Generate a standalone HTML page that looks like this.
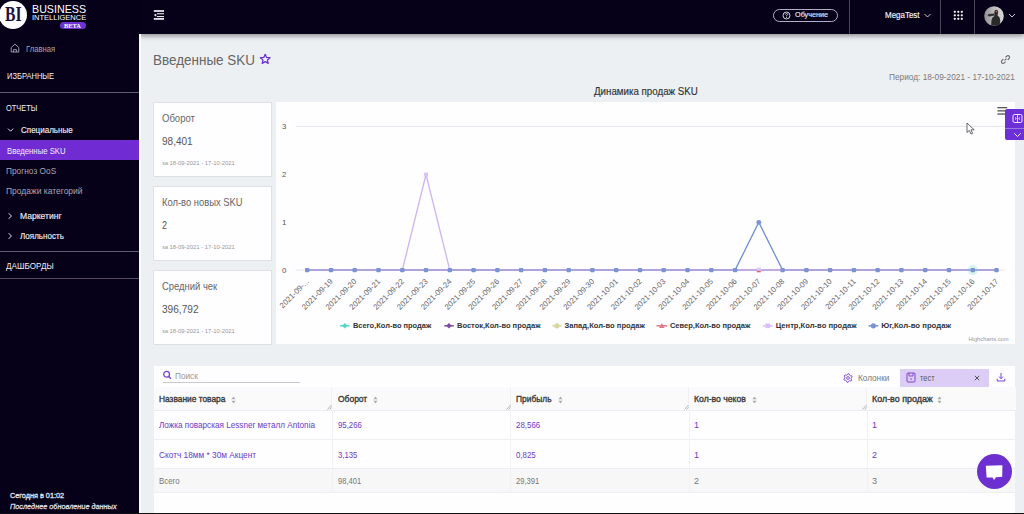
<!DOCTYPE html>
<html><head><meta charset="utf-8">
<style>
*{box-sizing:border-box;margin:0;padding:0}
html,body{width:1024px;height:514px;overflow:hidden;font-family:"Liberation Sans",sans-serif;background:#edf0f3;position:relative}
.abs{position:absolute}
.nw{white-space:nowrap}
#side{position:absolute;left:0;top:0;width:139px;height:514px;background:#060019}
#hdr{position:absolute;left:139px;top:0;width:885px;height:34px;background:#060019;box-shadow:0 2px 5px rgba(0,0,0,.42)}
.sb{position:absolute;white-space:nowrap;line-height:1}
.sm{-webkit-text-stroke:0.15px currentColor}
.sm2{-webkit-text-stroke:0.3px currentColor}
.card{position:absolute;left:153px;width:119.3px;height:75px;background:#fefdff;border:1px solid #dfe0e2}
.card .t{position:absolute;left:8px;top:10px;font-size:10.5px;color:#666;white-space:nowrap;line-height:1}
.card .v{position:absolute;left:8px;top:33px;font-size:11px;color:#555;white-space:nowrap;line-height:1}
.card .d{position:absolute;left:8px;top:56.5px;font-size:6px;color:#999;white-space:nowrap;line-height:1}
.th{position:absolute;top:387px;height:23.5px;background:#fafafb;border-right:1px solid #f0f0f2;border-bottom:1px solid #ededef;font-size:8.3px;font-weight:bold;color:#444;line-height:23px;padding-left:6px;white-space:nowrap}
.td{position:absolute;font-size:9px;white-space:nowrap;line-height:1}
.vl{position:absolute;width:1px;background:#f2f2f4}
.hl{position:absolute;height:1px;background:#efeff1}
.hd{position:absolute;top:394.5px;font-size:8.8px;color:#3a3a3a;-webkit-text-stroke:0.35px #3a3a3a;line-height:1;white-space:nowrap}
.sort{display:inline-block;vertical-align:middle;margin-left:6px;width:4px;height:9px;position:relative;top:-1px}
</style></head><body>
<!-- sidebar -->
<div id="side"></div>
<div id="hdr"></div>
<div class="abs" style="left:139px;top:34px;width:2px;height:480px;background:#f9fafb"></div>

<!-- logo -->
<div class="abs" style="left:-0.6px;top:1.3px;width:28px;height:28px;border-radius:50%;background:#fff"></div>
<div class="abs nw" style="left: 5.3px; top: 4.4px; font-family: &quot;Liberation Serif&quot;, serif; font-weight: bold; font-size: 20px; line-height: 1; color: rgb(27, 18, 64); transform: scaleX(0.7826); transform-origin: 0px 50%;">BI</div>
<div class="abs nw" style="left: 32.1px; top: 4.1px; font-size: 10.6px; line-height: 1; color: rgb(255, 255, 255); transform: scaleX(1.0092); transform-origin: 0px 50%;">BUSINESS</div>
<div class="abs nw" style="left: 32.1px; top: 13.8px; font-size: 7.8px; line-height: 1; color: rgb(255, 255, 255); transform: scaleX(0.9621); transform-origin: 0px 50%;">INTELLIGENCE</div>
<div class="abs" style="left:59.8px;top:22.4px;width:25.9px;height:7px;border-radius:3.5px;background:#6d34d3"></div>
<div class="abs nw" style="left: 64.1px; top: 22.6px; font-family: &quot;Liberation Serif&quot;, serif; font-weight: bold; font-size: 6.3px; line-height: 1; color: rgb(255, 255, 255); transform: scaleX(1.004); transform-origin: 0px 50%;">BETA</div>
<!-- sidebar menu -->
<svg class="abs" style="left:10.2px;top:43.3px" width="10" height="10" viewBox="0 0 10 10"><path d="M1.2 4.6 L5 1.1 L8.8 4.6 V9 H1.2Z M3.6 9 V6.6 H6.4 V9" fill="none" stroke="#aaa6ba" stroke-width="0.9" stroke-linejoin="round"></path></svg>
<div class="sb" style="left: 25.5px; top: 44.5px; font-size: 8.5px; color: rgb(169, 167, 179); transform: scaleX(0.9008); transform-origin: 0px 50%;">Главная</div>
<div class="sb" style="left: 6.6px; top: 72.3px; font-size: 8.4px; color: rgb(240, 240, 244); transform: scaleX(0.8995); transform-origin: 0px 50%;">ИЗБРАННЫЕ</div>
<div class="abs" style="left:0;top:92px;width:139px;height:1px;background:#5d5b6b"></div>
<div class="sb" style="left: 6px; top: 103.6px; font-size: 8.4px; color: rgb(240, 240, 244); transform: scaleX(0.8879); transform-origin: 0px 50%;">ОТЧЕТЫ</div>
<svg class="abs" style="left:7px;top:127px" width="7" height="6" viewBox="0 0 7 6"><path d="M1 1.6 L3.6 4.2 L6.2 1.6" fill="none" stroke="#e2e2ea" stroke-width="1"></path></svg>
<div class="sb sm" style="left: 20.5px; top: 126px; font-size: 8.5px; color: rgb(236, 236, 242); transform: scaleX(0.9454); transform-origin: 0px 50%;">Специальные</div>
<div class="abs" style="left:0;top:140px;width:139px;height:20px;background:#702bd3"></div>
<div class="sb" style="left: 6.6px; top: 147px; font-size: 8.5px; color: rgb(242, 238, 252); transform: scaleX(0.9091); transform-origin: 0px 50%;">Введенные SKU</div>
<div class="sb" style="left: 5.8px; top: 166.5px; font-size: 8.5px; color: rgb(169, 167, 179); transform: scaleX(0.9789); transform-origin: 0px 50%;">Прогноз OoS</div>
<div class="sb" style="left: 5.8px; top: 186.5px; font-size: 8.5px; color: rgb(169, 167, 179); transform: scaleX(0.9981); transform-origin: 0px 50%;">Продажи категорий</div>
<svg class="abs" style="left:7px;top:212px" width="6" height="8" viewBox="0 0 6 8"><path d="M1.7 1.2 L4.4 4 L1.7 6.8" fill="none" stroke="#e2e2ea" stroke-width="1"></path></svg>
<div class="sb sm" style="left: 20.4px; top: 212px; font-size: 8.5px; color: rgb(236, 236, 242); transform: scaleX(1.0067); transform-origin: 0px 50%;">Маркетинг</div>
<svg class="abs" style="left:7px;top:232px" width="6" height="8" viewBox="0 0 6 8"><path d="M1.7 1.2 L4.4 4 L1.7 6.8" fill="none" stroke="#e2e2ea" stroke-width="1"></path></svg>
<div class="sb sm" style="left: 20.4px; top: 232px; font-size: 8.5px; color: rgb(236, 236, 242); transform: scaleX(0.9475); transform-origin: 0px 50%;">Лояльность</div>
<div class="abs" style="left:0;top:251px;width:139px;height:1px;background:#5d5b6b"></div>
<div class="sb" style="left: 5.8px; top: 262.4px; font-size: 8.4px; color: rgb(240, 240, 244); transform: scaleX(0.9743); transform-origin: 0px 50%;">ДАШБОРДЫ</div>
<div class="abs" style="left:0;top:278.3px;width:139px;height:1px;background:#4f4d5e"></div>
<div class="sb sm2" style="left: 10.2px; top: 492.1px; font-size: 7.6px; color: rgb(230, 230, 236); transform: scaleX(0.9602); transform-origin: 0px 50%;">Сегодня в 01:02</div>
<div class="sb sm2" style="left: 10.2px; top: 503px; font-size: 7.6px; font-style: italic; color: rgb(220, 220, 228); transform: scaleX(0.9617); transform-origin: 0px 50%;">Последнее обновление данных</div>

<!-- header -->
<svg class="abs" style="left:153px;top:9px" width="12" height="12" viewBox="0 0 12 12"><g fill="#e4e4ec"><rect x="0.8" y="1.1" width="10.2" height="1.8"></rect><rect x="4" y="4.2" width="7" height="1.1"></rect><rect x="4" y="7" width="7" height="1.1"></rect><rect x="0.8" y="9" width="10.2" height="1.8"></rect><path d="M0.7 6.1 L3.3 4.4 V7.8Z"></path></g></svg>
<div class="abs" style="left:773px;top:9px;width:64.5px;height:12.5px;border:1px solid #b4abc6;border-radius:7px"></div>
<svg class="abs" style="left:782px;top:11px" width="9" height="9" viewBox="0 0 9 9"><circle cx="4.5" cy="4.5" r="3.5" fill="none" stroke="#e8e8ee" stroke-width="0.9"></circle><path d="M3.3 3.6 Q3.4 2.5 4.5 2.5 Q5.7 2.5 5.7 3.5 Q5.7 4.2 4.5 4.7 V5.3" fill="none" stroke="#e8e8ee" stroke-width="0.8"></path><circle cx="4.5" cy="6.5" r="0.5" fill="#e8e8ee"></circle></svg>
<div class="sb sm" style="left: 794.8px; top: 11.3px; font-size: 7.8px; color: rgb(236, 230, 246); transform: scaleX(0.9287); transform-origin: 0px 50%;">Обучение</div>
<div class="abs" style="left:849px;top:0;width:1px;height:34px;background:#4a4858"></div>
<div class="abs" style="left:940px;top:0;width:1px;height:34px;background:#4a4858"></div>
<div class="abs" style="left:974px;top:0;width:1px;height:34px;background:#4a4858"></div>
<div class="sb sm" style="left: 884.5px; top: 10.5px; font-size: 9.2px; color: rgb(244, 244, 248); transform: scaleX(0.8665); transform-origin: 0px 50%;">MegaTest</div>
<svg class="abs" style="left:923px;top:12px" width="9" height="7" viewBox="0 0 9 7"><path d="M1.5 2 L4.5 5 L7.5 2" fill="none" stroke="#e0e0e8" stroke-width="0.9"></path></svg>
<svg class="abs" style="left:952.5px;top:10.2px" width="11" height="11" viewBox="0 0 11 11"><g fill="#f4f4f8"><circle cx="1.8" cy="1.8" r="1.15"></circle><circle cx="5.3" cy="1.8" r="1.15"></circle><circle cx="8.8" cy="1.8" r="1.15"></circle><circle cx="1.8" cy="5.3" r="1.15"></circle><circle cx="5.3" cy="5.3" r="1.15"></circle><circle cx="8.8" cy="5.3" r="1.15"></circle><circle cx="1.8" cy="8.8" r="1.15"></circle><circle cx="5.3" cy="8.8" r="1.15"></circle><circle cx="8.8" cy="8.8" r="1.15"></circle></g></svg>
<svg class="abs" style="left:983.5px;top:5.5px" width="20" height="20" viewBox="0 0 20 20"><defs><clipPath id="av"><circle cx="10" cy="10" r="9.8"></circle></clipPath><linearGradient id="avg" x1="0" y1="0" x2="1" y2="0"><stop offset="0" stop-color="#8e8e8e"></stop><stop offset=".5" stop-color="#bdbdbd"></stop><stop offset="1" stop-color="#d8d8d8"></stop></linearGradient></defs><g clip-path="url(#av)"><rect width="20" height="20" fill="url(#avg)"></rect><path d="M7 21 L7.5 14 Q8 11 10.5 10 L10.8 8.5 Q10 7 10.6 5 Q11.8 3 13.5 4.2 Q14.5 5.5 13.8 8 L13.5 9.6 Q16 11 16.2 14 L16 21Z" fill="#2a2a2a"></path><path d="M11 9.5 L5 10.5 L3.5 9.2 L4.5 8 L10.6 7.5Z" fill="#333"></path><circle cx="12.4" cy="5.6" r="0.8" fill="#c86a50"></circle></g></svg>
<svg class="abs" style="left:1007.5px;top:12px" width="8" height="7" viewBox="0 0 8 7"><path d="M1 2 L4 5 L7 2" fill="none" stroke="#e0e0e8" stroke-width="0.9"></path></svg>

<!-- title -->
<div class="abs nw" style="left: 153.04px; top: 52.5px; font-size: 14px; line-height: 1; color: rgb(102, 102, 102); transform: scaleX(0.9626); transform-origin: 0px 50%;">Введенные SKU</div>
<svg class="abs" style="left:259px;top:52.6px" width="12" height="12" viewBox="0 0 12 12"><path d="M6.2 1.3 L7.6 4.4 L11 4.7 L8.4 6.9 L9.2 10.4 L6.2 8.6 L3.2 10.4 L4 6.9 L1.4 4.7 L4.8 4.4Z" fill="none" stroke="#6b30d4" stroke-width="1.25" stroke-linejoin="round"></path></svg>
<svg class="abs" style="left:1000px;top:54px" width="11" height="11" viewBox="0 0 11 11"><g fill="none" stroke="#666" stroke-width="1.1"><path d="M4.6 6.4 L6.4 4.6"></path><path d="M5.5 3.4 L6.8 2.1 Q8 1 9.2 2.1 Q10.2 3.3 9.1 4.5 L7.7 5.9"></path><path d="M5.5 7.6 L4.2 8.9 Q3 10 1.8 8.9 Q0.8 7.7 1.9 6.5 L3.3 5.1"></path></g></svg>
<div class="abs nw" style="left: 888.7px; top: 72.5px; font-size: 9.3px; line-height: 1; color: rgb(122, 122, 122); transform: scaleX(0.8909); transform-origin: 0px 50%;">Период: 18-09-2021 - 17-10-2021</div>
<div class="abs nw sm" style="left: 593.7px; top: 86.7px; font-size: 10px; line-height: 1; color: rgb(51, 51, 51); transform: scaleX(0.974); transform-origin: 0px 50%;">Динамика продаж SKU</div>

<!-- kpi cards -->
<div class="card" style="top:102px"><div class="t" style="left: 7.5px; transform: scaleX(0.9076); transform-origin: 0px 50%;">Оборот</div><div class="v" style="left: 7.5px; transform: scaleX(0.9097); transform-origin: 0px 50%;">98,401</div><div class="d" style="left: 7.5px; transform: scaleX(0.9783); transform-origin: 0px 50%;">за 18-09-2021 - 17-10-2021</div></div>
<div class="card" style="top:186px"><div class="t" style="left: 7.6px; transform: scaleX(0.8938); transform-origin: 0px 50%;">Кол-во новых SKU</div><div class="v" style="left: 7.6px; transform: scaleX(0.8167); transform-origin: 0px 50%;">2</div><div class="d" style="left: 7.5px; transform: scaleX(0.9783); transform-origin: 0px 50%;">за 18-09-2021 - 17-10-2021</div></div>
<div class="card" style="top:270px"><div class="t" style="left: 7.6px; transform: scaleX(0.898); transform-origin: 0px 50%;">Средний чек</div><div class="v" style="left: 7.6px; transform: scaleX(0.9182); transform-origin: 0px 50%;">396,792</div><div class="d" style="left: 7.5px; transform: scaleX(0.9783); transform-origin: 0px 50%;">за 18-09-2021 - 17-10-2021</div></div>

<!-- chart panel -->
<div class="abs" style="left:275.6px;top:102.2px;width:739.7px;height:242px;background:#fefdff"></div>
<svg class="abs" style="left:0;top:0" width="1024" height="514" viewBox="0 0 1024 514">
<g font-family="Liberation Sans" font-size="7.8" fill="#555">
<text x="286.3" y="129.3" text-anchor="end">3</text>
<text x="286.3" y="177.1" text-anchor="end">2</text>
<text x="286.3" y="224.9" text-anchor="end">1</text>
<text x="286.3" y="272.7" text-anchor="end">0</text>
</g>
<line x1="295.5" y1="126.4" x2="1005" y2="126.4" stroke="#e3e6ea" stroke-width="1"></line>
<line x1="295.5" y1="270.1" x2="1005" y2="270.1" stroke="#e3e6ea" stroke-width="1"></line>
<polyline points="307.2,270.1 331.0,270.1 354.7,270.1 378.5,270.1 402.3,270.1 426.0,270.1 449.8,270.1 473.6,270.1 497.4,270.1 521.1,270.1 544.9,270.1 568.7,270.1 592.4,270.1 616.2,270.1 640.0,270.1 663.8,270.1 687.5,270.1 711.3,270.1 735.1,270.1 758.8,270.1 782.6,270.1 806.4,270.1 830.1,270.1 853.9,270.1 877.7,270.1 901.5,270.1 925.2,270.1 949.0,270.1 972.8,270.1 996.5,270.1" fill="none" stroke="#e07a8a" stroke-width="1.2"></polyline>
<polyline points="307.2,270.1 331.0,270.1 354.7,270.1 378.5,270.1 402.3,270.1 426.0,174.5 449.8,270.1 473.6,270.1 497.4,270.1 521.1,270.1 544.9,270.1 568.7,270.1 592.4,270.1 616.2,270.1 640.0,270.1 663.8,270.1 687.5,270.1 711.3,270.1 735.1,270.1 758.8,270.1 782.6,270.1 806.4,270.1 830.1,270.1 853.9,270.1 877.7,270.1 901.5,270.1 925.2,270.1 949.0,270.1 972.8,270.1 996.5,270.1" fill="none" stroke="#cdb4f2" stroke-width="1.3"></polyline>
<polyline points="307.2,270.1 331.0,270.1 354.7,270.1 378.5,270.1 402.3,270.1 426.0,270.1 449.8,270.1 473.6,270.1 497.4,270.1 521.1,270.1 544.9,270.1 568.7,270.1 592.4,270.1 616.2,270.1 640.0,270.1 663.8,270.1 687.5,270.1 711.3,270.1 735.1,270.1 758.8,222.3 782.6,270.1 806.4,270.1 830.1,270.1 853.9,270.1 877.7,270.1 901.5,270.1 925.2,270.1 949.0,270.1 972.8,270.1 996.5,270.1" fill="none" stroke="#6f8fd4" stroke-width="1.3"></polyline>
<polyline points="307.2,270.1 996.5,270.1" fill="none" stroke="#b9a6e6" stroke-width="1.2"></polyline>
<circle cx="972.8" cy="270.1" r="5" fill="#5fd3c8" opacity=".25"></circle>
<g fill="#d7c2f6"><rect x="424.1" y="172.6" width="3.8" height="3.8"></rect></g>
<g fill="#7b93d3"><rect x="305.0" y="267.9" width="4.4" height="4.4" rx="1"></rect><rect x="328.8" y="267.9" width="4.4" height="4.4" rx="1"></rect><rect x="352.5" y="267.9" width="4.4" height="4.4" rx="1"></rect><rect x="376.3" y="267.9" width="4.4" height="4.4" rx="1"></rect><rect x="400.1" y="267.9" width="4.4" height="4.4" rx="1"></rect><rect x="423.8" y="267.9" width="4.4" height="4.4" rx="1"></rect><rect x="447.6" y="267.9" width="4.4" height="4.4" rx="1"></rect><rect x="471.4" y="267.9" width="4.4" height="4.4" rx="1"></rect><rect x="495.2" y="267.9" width="4.4" height="4.4" rx="1"></rect><rect x="518.9" y="267.9" width="4.4" height="4.4" rx="1"></rect><rect x="542.7" y="267.9" width="4.4" height="4.4" rx="1"></rect><rect x="566.5" y="267.9" width="4.4" height="4.4" rx="1"></rect><rect x="590.2" y="267.9" width="4.4" height="4.4" rx="1"></rect><rect x="614.0" y="267.9" width="4.4" height="4.4" rx="1"></rect><rect x="637.8" y="267.9" width="4.4" height="4.4" rx="1"></rect><rect x="661.5" y="267.9" width="4.4" height="4.4" rx="1"></rect><rect x="685.3" y="267.9" width="4.4" height="4.4" rx="1"></rect><rect x="709.1" y="267.9" width="4.4" height="4.4" rx="1"></rect><rect x="732.9" y="267.9" width="4.4" height="4.4" rx="1"></rect><rect x="780.4" y="267.9" width="4.4" height="4.4" rx="1"></rect><rect x="804.2" y="267.9" width="4.4" height="4.4" rx="1"></rect><rect x="827.9" y="267.9" width="4.4" height="4.4" rx="1"></rect><rect x="851.7" y="267.9" width="4.4" height="4.4" rx="1"></rect><rect x="875.5" y="267.9" width="4.4" height="4.4" rx="1"></rect><rect x="899.2" y="267.9" width="4.4" height="4.4" rx="1"></rect><rect x="923.0" y="267.9" width="4.4" height="4.4" rx="1"></rect><rect x="946.8" y="267.9" width="4.4" height="4.4" rx="1"></rect><rect x="970.6" y="267.9" width="4.4" height="4.4" rx="1"></rect><rect x="994.3" y="267.9" width="4.4" height="4.4" rx="1"></rect></g><circle cx="758.8" cy="222.3" r="2.4" fill="#7b93d3"></circle>
<rect x="756.8" y="268.8" width="4" height="3.5" fill="#e0607a"></rect>
<rect x="756.6" y="267.7" width="4.4" height="3" fill="#dccaf6"></rect>
<g font-family="Liberation Sans" font-size="7.8" fill="#666">
<text transform="translate(309.5,282) rotate(-45)" text-anchor="end">2021-09-...</text>
<text transform="translate(333.3,282) rotate(-45)" text-anchor="end">2021-09-19</text>
<text transform="translate(357.0,282) rotate(-45)" text-anchor="end">2021-09-20</text>
<text transform="translate(380.8,282) rotate(-45)" text-anchor="end">2021-09-21</text>
<text transform="translate(404.6,282) rotate(-45)" text-anchor="end">2021-09-22</text>
<text transform="translate(428.3,282) rotate(-45)" text-anchor="end">2021-09-23</text>
<text transform="translate(452.1,282) rotate(-45)" text-anchor="end">2021-09-24</text>
<text transform="translate(475.9,282) rotate(-45)" text-anchor="end">2021-09-25</text>
<text transform="translate(499.7,282) rotate(-45)" text-anchor="end">2021-09-26</text>
<text transform="translate(523.4,282) rotate(-45)" text-anchor="end">2021-09-27</text>
<text transform="translate(547.2,282) rotate(-45)" text-anchor="end">2021-09-28</text>
<text transform="translate(571.0,282) rotate(-45)" text-anchor="end">2021-09-29</text>
<text transform="translate(594.7,282) rotate(-45)" text-anchor="end">2021-09-30</text>
<text transform="translate(618.5,282) rotate(-45)" text-anchor="end">2021-10-01</text>
<text transform="translate(642.3,282) rotate(-45)" text-anchor="end">2021-10-02</text>
<text transform="translate(666.0,282) rotate(-45)" text-anchor="end">2021-10-03</text>
<text transform="translate(689.8,282) rotate(-45)" text-anchor="end">2021-10-04</text>
<text transform="translate(713.6,282) rotate(-45)" text-anchor="end">2021-10-05</text>
<text transform="translate(737.4,282) rotate(-45)" text-anchor="end">2021-10-06</text>
<text transform="translate(761.1,282) rotate(-45)" text-anchor="end">2021-10-07</text>
<text transform="translate(784.9,282) rotate(-45)" text-anchor="end">2021-10-08</text>
<text transform="translate(808.7,282) rotate(-45)" text-anchor="end">2021-10-09</text>
<text transform="translate(832.4,282) rotate(-45)" text-anchor="end">2021-10-10</text>
<text transform="translate(856.2,282) rotate(-45)" text-anchor="end">2021-10-11</text>
<text transform="translate(880.0,282) rotate(-45)" text-anchor="end">2021-10-12</text>
<text transform="translate(903.8,282) rotate(-45)" text-anchor="end">2021-10-13</text>
<text transform="translate(927.5,282) rotate(-45)" text-anchor="end">2021-10-14</text>
<text transform="translate(951.3,282) rotate(-45)" text-anchor="end">2021-10-15</text>
<text transform="translate(975.1,282) rotate(-45)" text-anchor="end">2021-10-16</text>
<text transform="translate(998.8,282) rotate(-45)" text-anchor="end">2021-10-17</text>
</g>
<g font-family="Liberation Sans" font-size="7.3" font-weight="bold" fill="#333">
<text x="352.9" y="328.1" textLength="78.4" lengthAdjust="spacingAndGlyphs">Всего,Кол-во продаж</text>
<text x="457" y="328.1" textLength="83.5" lengthAdjust="spacingAndGlyphs">Восток,Кол-во продаж</text>
<text x="564.6" y="328.1" textLength="80.3" lengthAdjust="spacingAndGlyphs">Запад,Кол-во продаж</text>
<text x="669.9" y="328.1" textLength="80.5" lengthAdjust="spacingAndGlyphs">Север,Кол-во продаж</text>
<text x="775.7" y="328.1" textLength="80.9" lengthAdjust="spacingAndGlyphs">Центр,Кол-во продаж</text>
<text x="881.2" y="328.1" textLength="69.8" lengthAdjust="spacingAndGlyphs">Юг,Кол-во продаж</text>
</g>
<g stroke-width="1.5">
<line x1="340" y1="325.8" x2="349.6" y2="325.8" stroke="#5fd3c8"></line><path d="M344.8 323 L347.6 325.8 L344.8 328.6 L342 325.8Z" fill="#5fd3c8"></path>
<line x1="444.3" y1="325.8" x2="453.8" y2="325.8" stroke="#7e4aa0"></line><path d="M449 323 L451.8 325.8 L449 328.6 L446.2 325.8Z" fill="#7e4aa0"></path>
<line x1="552.4" y1="325.8" x2="561.4" y2="325.8" stroke="#d9d6a0"></line><circle cx="556.9" cy="325.8" r="2.6" fill="#d9d6a0"></circle>
<line x1="656.5" y1="325.8" x2="667.3" y2="325.8" stroke="#e07a8a"></line><path d="M661.9 323 L664.7 328 L659.1 328Z" fill="#e07a8a"></path>
<line x1="763" y1="325.8" x2="772.8" y2="325.8" stroke="#d9bff7"></line><rect x="765.5" y="323.5" width="4.6" height="4.6" fill="#d9bff7"></rect>
<line x1="868.6" y1="325.8" x2="878.3" y2="325.8" stroke="#7b93d3"></line><circle cx="873.4" cy="325.8" r="2.6" fill="#7b93d3"></circle>
</g>
<text x="1008.7" y="341" text-anchor="end" font-family="Liberation Sans" font-size="5.8" fill="#999">Highcharts.com</text>
<g fill="#555"><rect x="997.4" y="107" width="9.8" height="1.3"></rect><rect x="997.4" y="110.2" width="9.8" height="1.3"></rect><rect x="997.4" y="113.4" width="9.8" height="1.3"></rect></g>
</svg>
<!-- side tab -->
<div class="abs" style="left:1005.2px;top:109px;width:19px;height:30.5px;background:#6d2fd6;border-radius:2px 0 0 2px"></div>
<div class="abs" style="left:1005.2px;top:128px;width:19px;height:1px;background:#9a78e4"></div>
<svg class="abs" style="left:1012px;top:113px" width="11" height="11" viewBox="0 0 11 11"><rect x="1" y="1.5" width="9" height="8" rx="1.5" fill="none" stroke="#fff" stroke-width="0.9"></rect><path d="M5.5 2 V9 M3 4.5 L4.3 5.5 L3 6.5 M8 4.5 L6.7 5.5 L8 6.5" fill="none" stroke="#fff" stroke-width="0.8"></path></svg>
<svg class="abs" style="left:1013px;top:131px" width="9" height="8" viewBox="0 0 9 8"><path d="M1.3 2.3 L4.5 5.6 L7.7 2.3" fill="none" stroke="#fff" stroke-width="0.9"></path></svg>
<!-- cursor -->
<svg class="abs" style="left:966px;top:122px" width="10" height="13" viewBox="0 0 10 13"><path d="M1 1 V10.5 L3.3 8.4 L5 12 L6.6 11.3 L5 7.8 L8.2 7.8Z" fill="#fff" stroke="#444" stroke-width="0.8"></path></svg>

<!-- table panel -->
<div class="abs" style="left:153.6px;top:365.5px;width:861.8px;height:148.5px;background:#fefdff"></div>
<svg class="abs" style="left:162px;top:370px" width="11" height="10" viewBox="0 0 11 10"><circle cx="4.6" cy="4.3" r="2.9" fill="none" stroke="#7a45d0" stroke-width="1.3"></circle><path d="M6.7 6.4 L9 8.7" stroke="#7a45d0" stroke-width="1.4"></path></svg>
<div class="sb" style="left: 175px; top: 372px; font-size: 8.3px; color: rgb(153, 153, 153); transform: scaleX(0.9931); transform-origin: 0px 50%;">Поиск</div>
<div class="abs" style="left:163px;top:382px;width:137px;height:1px;background:#c9c9cf"></div>
<svg class="abs" style="left:843.3px;top:373px" width="10" height="10" viewBox="0 0 10 10"><path d="M5.00 0.70 L6.11 0.85 L6.60 2.23 L7.26 2.74 L8.72 2.85 L9.15 3.89 L8.20 5.00 L8.09 5.83 L8.72 7.15 L8.04 8.04 L6.60 7.77 L5.83 8.09 L5.00 9.30 L3.89 9.15 L3.40 7.77 L2.74 7.26 L1.28 7.15 L0.85 6.11 L1.80 5.00 L1.91 4.17 L1.28 2.85 L1.96 1.96 L3.40 2.23 L4.17 1.91Z" fill="none" stroke="#7a45d0" stroke-width="0.9" stroke-linejoin="round"></path><circle cx="5" cy="5" r="1.4" fill="none" stroke="#7a45d0" stroke-width="0.9"></circle></svg>
<div class="sb" style="left: 857.5px; top: 373.5px; font-size: 8.6px; color: rgb(119, 119, 119); transform: scaleX(0.9548); transform-origin: 0px 50%;">Колонки</div>
<div class="abs" style="left:900px;top:368.5px;width:88.6px;height:18.3px;background:#dccdf6;border-radius:1px"></div>
<svg class="abs" style="left:906px;top:372px" width="10" height="11" viewBox="0 0 10 11"><rect x="1" y="1" width="8" height="9" rx="1" fill="none" stroke="#7a45d0" stroke-width="1"></rect><path d="M3 1 V4 H7 V1 M5 6 V8" fill="none" stroke="#7a45d0" stroke-width="0.9"></path></svg>
<div class="sb" style="left: 920px; top: 373.5px; font-size: 8.6px; color: rgb(85, 85, 85); transform: scaleX(0.8631); transform-origin: 0px 50%;">тест</div>
<svg class="abs" style="left:973.5px;top:375px" width="6" height="6" viewBox="0 0 6 6"><path d="M0.8 0.8 L5.2 5.2 M5.2 0.8 L0.8 5.2" stroke="#444" stroke-width="0.9"></path></svg>
<svg class="abs" style="left:995.5px;top:372px" width="10" height="10" viewBox="0 0 10 10"><path d="M5 1 V6.6 M3 4.6 L5 6.6 L7 4.6 M1.2 6.8 V9 H8.8 V6.8" fill="none" stroke="#7a45d0" stroke-width="1"></path></svg>

<!-- header row -->
<div class="abs" style="left:153.5px;top:387px;width:862px;height:1px;background:#f0f0f2"></div>
<div class="th" style="left:153.5px;width:178.5px"></div>
<div class="th" style="left:332px;width:178.5px"></div>
<div class="th" style="left:510.5px;width:178.5px"></div>
<div class="th" style="left:689px;width:177.5px"></div>
<div class="th" style="left:866.5px;width:149px;border-right:none"></div>
<div class="hd" style="left: 158.9px; transform: scaleX(0.9509); transform-origin: 0px 50%;">Название товара</div>
<div class="hd" style="left: 337.7px; transform: scaleX(0.9616); transform-origin: 0px 50%;">Оборот</div>
<div class="hd" style="left: 515.6px; transform: scaleX(0.9542); transform-origin: 0px 50%;">Прибыль</div>
<div class="hd" style="left: 693.6px; transform: scaleX(0.9828); transform-origin: 0px 50%;">Кол-во чеков</div>
<div class="hd" style="left: 871.6px; transform: scaleX(1.012); transform-origin: 0px 50%;">Кол-во продаж</div>
<svg class="abs" style="left:230.8px;top:394.5px" width="5" height="10" viewBox="0 0 5 10"><path d="M0.4 4.2 L2.5 1.4 L4.6 4.2Z M0.4 5.8 L2.5 8.6 L4.6 5.8Z" fill="#acacb2"></path></svg><svg class="abs" style="left:372.8px;top:394.5px" width="5" height="10" viewBox="0 0 5 10"><path d="M0.4 4.2 L2.5 1.4 L4.6 4.2Z M0.4 5.8 L2.5 8.6 L4.6 5.8Z" fill="#acacb2"></path></svg><svg class="abs" style="left:557.5px;top:394.5px" width="5" height="10" viewBox="0 0 5 10"><path d="M0.4 4.2 L2.5 1.4 L4.6 4.2Z M0.4 5.8 L2.5 8.6 L4.6 5.8Z" fill="#acacb2"></path></svg><svg class="abs" style="left:751.5px;top:394.5px" width="5" height="10" viewBox="0 0 5 10"><path d="M0.4 4.2 L2.5 1.4 L4.6 4.2Z M0.4 5.8 L2.5 8.6 L4.6 5.8Z" fill="#acacb2"></path></svg><svg class="abs" style="left:937.0px;top:394.5px" width="5" height="10" viewBox="0 0 5 10"><path d="M0.4 4.2 L2.5 1.4 L4.6 4.2Z M0.4 5.8 L2.5 8.6 L4.6 5.8Z" fill="#acacb2"></path></svg><svg class="abs" style="left:327.0px;top:404px" width="5" height="6" viewBox="0 0 5 6"><path d="M0.5 5.5 L4.5 1 M2.5 5.5 L4.5 3.3" stroke="#999" stroke-width="0.7"></path></svg><svg class="abs" style="left:505.5px;top:404px" width="5" height="6" viewBox="0 0 5 6"><path d="M0.5 5.5 L4.5 1 M2.5 5.5 L4.5 3.3" stroke="#999" stroke-width="0.7"></path></svg><svg class="abs" style="left:684.0px;top:404px" width="5" height="6" viewBox="0 0 5 6"><path d="M0.5 5.5 L4.5 1 M2.5 5.5 L4.5 3.3" stroke="#999" stroke-width="0.7"></path></svg><svg class="abs" style="left:862.0px;top:404px" width="5" height="6" viewBox="0 0 5 6"><path d="M0.5 5.5 L4.5 1 M2.5 5.5 L4.5 3.3" stroke="#999" stroke-width="0.7"></path></svg>
<!-- rows -->
<div class="abs" style="left:153.6px;top:468px;width:861.8px;height:24px;background:#f7f7f8"></div>
<div class="hl" style="left:153.5px;top:439px;width:862px"></div>
<div class="hl" style="left:153.5px;top:468px;width:862px"></div>
<div class="hl" style="left:153.5px;top:492px;width:862px"></div>
<div class="vl" style="left:331.5px;top:410px;height:82px"></div>
<div class="vl" style="left:510px;top:410px;height:82px"></div>
<div class="vl" style="left:688.5px;top:410px;height:82px"></div>
<div class="vl" style="left:866.5px;top:410px;height:82px"></div>

<div class="td" style="left: 159px; top: 421px; color: rgb(106, 60, 196); transform: scaleX(0.9069); transform-origin: 0px 50%;">Ложка поварская Lessner металл Antonia</div>
<div class="td" style="left: 337.7px; top: 421px; color: rgb(106, 60, 196); transform: scaleX(0.8648); transform-origin: 0px 50%;">95,266</div>
<div class="td" style="left: 515.6px; top: 421px; color: rgb(106, 60, 196); transform: scaleX(0.8793); transform-origin: 0px 50%;">28,566</div>
<div class="td" style="left:694.0px;top:421px;color:#6a3cc4">1</div>
<div class="td" style="left:872.0px;top:421px;color:#6a3cc4">1</div>

<div class="td" style="left: 159px; top: 450.5px; color: rgb(106, 60, 196); transform: scaleX(0.9219); transform-origin: 0px 50%;">Скотч 18мм * 30м Акцент</div>
<div class="td" style="left: 337.7px; top: 450.5px; color: rgb(106, 60, 196); transform: scaleX(0.8571); transform-origin: 0px 50%;">3,135</div>
<div class="td" style="left: 515.6px; top: 450.5px; color: rgb(106, 60, 196); transform: scaleX(0.8749); transform-origin: 0px 50%;">0,825</div>
<div class="td" style="left:694.0px;top:450.5px;color:#6a3cc4">1</div>
<div class="td" style="left:872.0px;top:450.5px;color:#6a3cc4">2</div>

<div class="td" style="left: 158.9px; top: 476.5px; color: rgb(119, 119, 119); transform: scaleX(0.8731); transform-origin: 0px 50%;">Всего</div>
<div class="td" style="left: 337.7px; top: 476.5px; color: rgb(119, 119, 119); transform: scaleX(0.8466); transform-origin: 0px 50%;">98,401</div>
<div class="td" style="left: 515.6px; top: 476.5px; color: rgb(119, 119, 119); transform: scaleX(0.8466); transform-origin: 0px 50%;">29,391</div>
<div class="td" style="left:694.0px;top:476.5px;color:#777">2</div>
<div class="td" style="left:872.0px;top:476.5px;color:#777">3</div>

<!-- chat bubble -->
<div class="abs" style="left:976.7px;top:454.2px;width:35.3px;height:35.3px;border-radius:50%;background:#6d2fd0"></div>
<svg class="abs" style="left:984px;top:463px" width="20" height="19" viewBox="0 0 20 19"><path d="M1.8 2.8 L18.4 2.2 L18.2 13.8 L12 14.3 L10 17 L8.6 14.6 L2.6 14.6Z" fill="#fff"></path></svg>

<!-- bottom dark line -->
<div class="abs" style="left:0;top:512.7px;width:1024px;height:1.3px;background:#111"></div>

</body></html>
